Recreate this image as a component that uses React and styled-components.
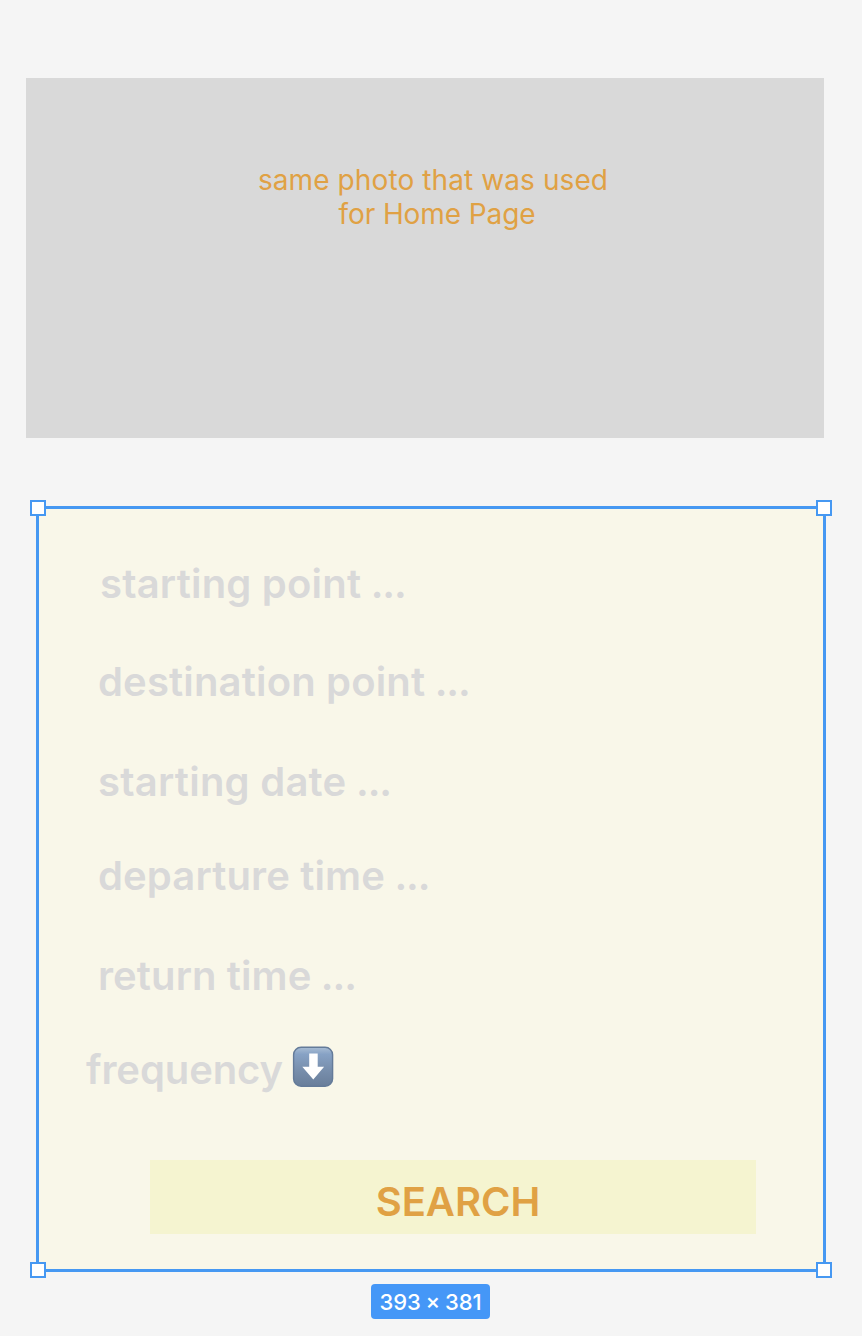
import React from "react";
import styled, { createGlobalStyle } from "styled-components";

const Global = createGlobalStyle`
  *, *::before, *::after { box-sizing: border-box; }
  body {
    margin: 0;
    background: #f5f5f5;
    font-family: Inter, "Liberation Sans", sans-serif;
  }
`;

const Canvas = styled.main`
  display: flex;
  flex-direction: column;
  width: 862px;
  height: 1336px;
  padding: 78px 36px 0 26px;
  overflow: hidden;
  background: #f5f5f5;
`;

const Photo = styled.section`
  width: 798px;
  height: 360px;
  padding: 85px 0 0 16px;
  background: #d9d9d9;
`;

const Caption = styled.p`
  margin: 0;
  color: #e0a144;
  font-size: 28px;
  line-height: 34px;
  letter-spacing: ${(p) => p.$spacing || 0}px;
  text-align: center;
  white-space: pre;
  padding-left: ${(p) => p.$shift || 0}px;
`;

const Frame = styled.section`
  position: relative;
  display: flex;
  flex-direction: column;
  width: 790px;
  height: 766px;
  margin: 68px 0 0 10px;
  border: 3px solid #4698f2;
  background: #f9f7e9;
`;

const Handle = styled.span`
  position: absolute;
  width: 16px;
  height: 16px;
  border: 2px solid #4698f2;
  background: #fff;
  ${(p) => p.$v}: -9px;
  ${(p) => p.$h}: -9px;
`;

const Fields = styled.div`
  display: flex;
  flex-direction: column;
  padding-top: 51px;
`;

const Field = styled.div`
  display: flex;
  height: ${(p) => p.$step}px;
  padding-left: ${(p) => p.$left}px;
  color: #d9d9d9;
  font-size: 40px;
  font-weight: 600;
  line-height: 48px;
  letter-spacing: ${(p) => p.$spacing}px;
  white-space: pre;
`;

const Dots = styled.span`
  margin-left: -0.8px;
  letter-spacing: -1.1px;
`;

const ArrowKey = styled.svg`
  width: 42px;
  height: 42px;
  margin: 0 0 0 9px;
`;

const SearchButton = styled.button`
  width: 606px;
  height: 74px;
  margin: 0 0 0 111px;
  padding: 10px 0 0 10px;
  border: 0;
  background: #f5f4d0;
  color: #e0a144;
  font-family: inherit;
  font-size: 40px;
  font-weight: 600;
  line-height: 48px;
  text-align: center;
`;

const SizeBadge = styled.div`
  flex: none;
  display: flex;
  justify-content: center;
  gap: 5px;
  width: 119px;
  height: 35px;
  margin: 12px 0 0 345px;
  border-radius: 4px;
  background: #4597f7;
  color: #fff;
  font-size: 22px;
  font-weight: 550;
  line-height: 36px;
  letter-spacing: -0.15px;
`;

const Times = styled.span`
  line-height: 34px;
`;

const fields = [
  { label: "starting point ", step: 98, left: 61, spacing: 0.2, dots: true },
  { label: "destination point ", step: 100, left: 59, spacing: 0.16, dots: true },
  { label: "starting date ", step: 94, left: 59, spacing: 0.24, dots: true },
  { label: "departure time ", step: 100, left: 59, spacing: 0.13, dots: true },
  { label: "return time ", step: 94, left: 59, spacing: 0.1, dots: true },
  { label: "frequency", step: 114, left: 47, spacing: -0.1, arrow: true },
];

function DownArrow() {
  return (
    <ArrowKey viewBox="0 0 42 42" aria-label="down">
      <defs>
        <linearGradient id="key" x1="0" y1="0" x2="0" y2="1">
          <stop offset="0" stopColor="#a9bdd4" />
          <stop offset="0.18" stopColor="#87a2c5" />
          <stop offset="0.55" stopColor="#7990ae" />
          <stop offset="1" stopColor="#697e9a" />
        </linearGradient>
      </defs>
      <rect x="1.6" y="1.2" width="39" height="39" rx="7.5" fill="url(#key)" stroke="#647b99" strokeWidth="1.4" />
      <path d="M17.2 7.5h8.5v13.2h6.4L21.3 33.6 10.3 20.7h6.9z" fill="#fff" />
    </ArrowKey>
  );
}

export default function App() {
  return (
    <>
      <Global />
      <Canvas>
        <Photo>
          <Caption $spacing={0.1}>same photo that was used</Caption>
          <Caption $shift={8} $spacing={-0.1}>for Home Page</Caption>
        </Photo>
        <Frame>
          <Fields>
            {fields.map((f) => (
              <Field key={f.label} $step={f.step} $left={f.left} $spacing={f.spacing}>
                <span>{f.label}</span>
                {f.dots && <Dots>...</Dots>}
                {f.arrow && <DownArrow />}
              </Field>
            ))}
          </Fields>
          <SearchButton>SEARCH</SearchButton>
          <Handle $v="top" $h="left" />
          <Handle $v="top" $h="right" />
          <Handle $v="bottom" $h="left" />
          <Handle $v="bottom" $h="right" />
        </Frame>
        <SizeBadge>
          <span>393</span>
          <Times>×</Times>
          <span>381</span>
        </SizeBadge>
      </Canvas>
    </>
  );
}
